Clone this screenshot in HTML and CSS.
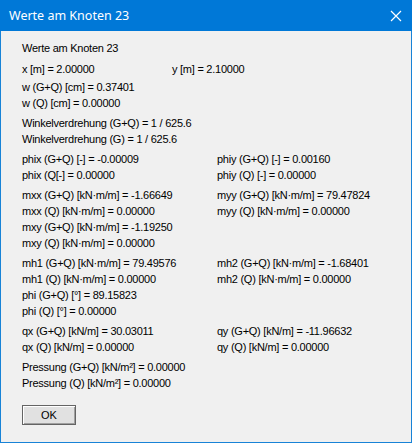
FILE: index.html
```html
<!DOCTYPE html>
<html>
<head>
<meta charset="utf-8">
<link rel="stylesheet" href="styles.css">
</head>
<body>
<div class="window">
  <div class="titlebar">
    <span class="title">Werte am Knoten 23</span>
    <svg class="close" width="12" height="12" viewBox="0 0 12 12"><path d="M1 1 L11 11 M11 1 L1 11" stroke="#fff" stroke-width="1.2" fill="none"/></svg>
  </div>
  <div class="content">
    <div class="row">Werte am Knoten 23</div>
    <div class="group xy">
      <div>x [m] = 2.00000</div>
      <div>y [m] = 2.10000</div>
    </div>
    <div class="group tight">
      <div class="row">w (G+Q) [cm] = 0.37401</div>
      <div class="row">w (Q) [cm] = 0.00000</div>
    </div>
    <div class="group">
      <div class="row">Winkelverdrehung (G+Q) = 1 / 625.6</div>
      <div class="row">Winkelverdrehung (G) = 1 / 625.6</div>
    </div>
    <div class="group two">
      <div>phix (G+Q) [-] = -0.00009</div><div>phiy (G+Q) [-] = 0.00160</div>
      <div>phix (Q[-] = 0.00000</div><div>phiy (Q) [-] = 0.00000</div>
    </div>
    <div class="group two">
      <div>mxx (G+Q) [kN·m/m] = -1.66649</div><div>myy (G+Q) [kN·m/m] = 79.47824</div>
      <div>mxx (Q) [kN·m/m] = 0.00000</div><div>myy (Q) [kN·m/m] = 0.00000</div>
      <div>mxy (G+Q) [kN·m/m] = -1.19250</div><div></div>
      <div>mxy (Q) [kN·m/m] = 0.00000</div><div></div>
    </div>
    <div class="group two">
      <div>mh1 (G+Q) [kN·m/m] = 79.49576</div><div>mh2 (G+Q) [kN·m/m] = -1.68401</div>
      <div>mh1 (Q) [kN·m/m] = 0.00000</div><div>mh2 (Q) [kN·m/m] = 0.00000</div>
      <div>phi (G+Q) [°] = 89.15823</div><div></div>
      <div>phi (Q) [°] = 0.00000</div><div></div>
    </div>
    <div class="group two">
      <div>qx (G+Q) [kN/m] = 30.03011</div><div>qy (G+Q) [kN/m] = -11.96632</div>
      <div>qx (Q) [kN/m] = 0.00000</div><div>qy (Q) [kN/m] = 0.00000</div>
    </div>
    <div class="group">
      <div class="row">Pressung (G+Q) [kN/m²] = 0.00000</div>
      <div class="row">Pressung (Q) [kN/m²] = 0.00000</div>
    </div>
    <button class="ok">OK</button>
  </div>
</div>
</body>
</html>
```

FILE: styles.css
```css
html, body {
  margin: 0;
  padding: 0;
  background: #f0f0f0;
}
.window {
  width: 412px;
  height: 443px;
  box-sizing: border-box;
  border: 1px solid #1883d7;
  border-top: none;
  background: #f0f0f0;
  font-family: "Liberation Sans", Arial, sans-serif;
  font-size: 11px;
  letter-spacing: -0.25px;
  color: #000;
}
.titlebar {
  height: 31px;
  margin: 0 -1px;
  background: #0078d7;
  display: flex;
  align-items: center;
  justify-content: space-between;
  padding: 0 10px 0 9px;
}
.title {
  color: #fff;
  font-family: "Noto Sans", "Liberation Sans", sans-serif;
  font-size: 12.5px;
  letter-spacing: 0;
}
.close {
  display: block;
}
.content {
  padding: 9px 0 0 21px;
  display: flex;
  flex-direction: column;
  align-items: flex-start;
}
.row, .two > div, .xy > div {
  height: 16px;
  line-height: 16px;
  white-space: nowrap;
}
.group {
  margin-top: 4px;
}
.tight {
  margin-top: 2px;
}
.xy {
  margin-top: 5px;
  display: grid;
  grid-template-columns: 150px auto;
}
.two {
  display: grid;
  grid-template-columns: 195px auto;
}
.ok {
  margin-top: 14px;
  width: 54px;
  height: 20px;
  box-sizing: border-box;
  border: 1px solid #646464;
  box-shadow: inset 1px 1px #ffffff, inset -1px -1px #a0a0a0;
  background: #e1e1e1;
  font-family: "Liberation Sans", Arial, sans-serif;
  font-size: 11px;
  color: #000;
  padding: 0;
}
```
